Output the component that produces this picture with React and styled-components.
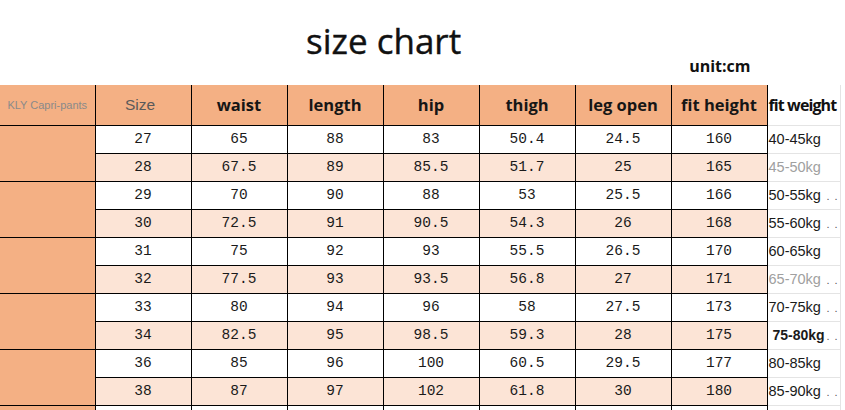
import { createGlobalStyle } from 'styled-components';
import styled from 'styled-components';

const COLORS = {
  orange: "#f4b084",
  pink: "#fce4d6",
  line: "#000",
  faint: "#e4e4e4",
  text: "#1a1a1a"
}

const GlobalStyle = createGlobalStyle`
body{
  margin:0;
  background:#fff;
}
`

const StyledPage = styled.main`
width:845px;
height:410px;
overflow:hidden;
background:#fff;
`

const StyledTitleBar = styled.header`
height:85px;
display:flex;
padding-left:306px;
box-sizing:border-box;
`

const StyledTitle = styled.h1`
margin:23px 0 0 0;
font-family:"Open Sans", sans-serif;
font-weight:400;
font-size:35px;
line-height:1;
color:#111;
-webkit-text-stroke:0.4px #111;
`

const StyledUnit = styled.span`
margin:58px 0 0 228px;
font-family:"Open Sans", sans-serif;
font-weight:700;
font-size:16px;
line-height:1;
color:#111;
`

const StyledTable = styled.table`
border-collapse:collapse;
table-layout:fixed;
width:840px;
`

const StyledRow = styled.tr`
height:${p => p.$head ? 40 : 28}px;
background:${p => p.$pink ? COLORS.pink : "#fff"};
`

const StyledHeadCell = styled.th`
padding:0;
background:${COLORS.orange};
border:1px solid ${COLORS.line};
border-top:none;
font-family:"Open Sans", sans-serif;
font-weight:700;
font-size:16.5px;
color:#161616;
white-space:nowrap;
overflow:hidden;
`

const StyledLabelCell = styled(StyledHeadCell)`
border-left:none;
font-family:"Liberation Sans", Arial, sans-serif;
font-weight:400;
font-size:11px;
color:#8a8a8a;
`

const StyledSizeHead = styled(StyledHeadCell)`
font-family:"Liberation Sans", Arial, sans-serif;
font-weight:400;
font-size:15.5px;
color:#5a5a5a;
padding-right:6px;
`

const StyledWeightHead = styled.th`
padding:0 0 0 1px;
text-align:left;
background:#fff;
border-bottom:1px solid ${COLORS.faint};
border-right:1px solid ${COLORS.faint};
font-family:"Open Sans", sans-serif;
font-weight:700;
font-size:16px;
letter-spacing:-0.9px;
color:#111;
white-space:nowrap;
overflow:hidden;
`

const StyledGroupCell = styled.td`
padding:0;
background:${COLORS.orange};
border:1px solid ${COLORS.line};
border-left:none;
`

const StyledCell = styled.td`
padding:0;
text-align:center;
border:1px solid ${COLORS.line};
font-family:"Liberation Mono", "Courier New", monospace;
font-size:14.5px;
color:${COLORS.text};
`

const StyledWeightCell = styled.td`
padding:0 0 0 1px;
background:#fff;
border-bottom:1px solid ${COLORS.faint};
border-right:1px solid ${COLORS.faint};
font-family:"Liberation Sans", Arial, sans-serif;
font-size:14.5px;
white-space:nowrap;
overflow:hidden;
`

const StyledWeightInner = styled.div`
display:flex;
align-items:baseline;
`

const StyledWeight = styled.span`
color:${p => p.$muted ? "#a0a0a0" : "#1a1a1a"};
font-weight:${p => p.$bold ? 700 : 400};
font-size:${p => p.$bold ? 14 : 14.5}px;
padding-left:${p => p.$bold ? 4 : 0}px;
`

const StyledDots = styled.span`
margin-left:auto;
padding-right:2px;
font-size:11px;
color:#555;
display:flex;
gap:5px;
`

const HEAD = ["waist", "length", "hip", "thigh", "leg open", "fit height"]

const ROWS = [
  { size: "27", v: ["65", "88", "83", "50.4", "24.5", "160"], w: "40-45kg" },
  { size: "28", v: ["67.5", "89", "85.5", "51.7", "25", "165"], w: "45-50kg", muted: true },
  { size: "29", v: ["70", "90", "88", "53", "25.5", "166"], w: "50-55kg", dots: true },
  { size: "30", v: ["72.5", "91", "90.5", "54.3", "26", "168"], w: "55-60kg", dots: true },
  { size: "31", v: ["75", "92", "93", "55.5", "26.5", "170"], w: "60-65kg" },
  { size: "32", v: ["77.5", "93", "93.5", "56.8", "27", "171"], w: "65-70kg", muted: true, dots: true },
  { size: "33", v: ["80", "94", "96", "58", "27.5", "173"], w: "70-75kg", dots: true },
  { size: "34", v: ["82.5", "95", "98.5", "59.3", "28", "175"], w: "75-80kg", bold: true, dots: true },
  { size: "36", v: ["85", "96", "100", "60.5", "29.5", "177"], w: "80-85kg" },
  { size: "38", v: ["87", "97", "102", "61.8", "30", "180"], w: "85-90kg", dots: true },
  { size: "next", v: ["", "", "", "", "", ""], w: "" },
]

export default function App() {
  return (
    <>
      <GlobalStyle />
      <StyledPage>
        <StyledTitleBar>
          <StyledTitle>size chart</StyledTitle>
          <StyledUnit>unit:cm</StyledUnit>
        </StyledTitleBar>
        <StyledTable>
          <colgroup>
            <col style={{ width: 95 }} />
            {[0, 1, 2, 3, 4, 5, 6].map(i => <col key={i} style={{ width: 96 }} />)}
            <col style={{ width: 73 }} />
          </colgroup>
          <thead>
            <StyledRow $head>
              <StyledLabelCell>KLY Capri-pants</StyledLabelCell>
              <StyledSizeHead>Size</StyledSizeHead>
              {HEAD.map(h => <StyledHeadCell key={h}>{h}</StyledHeadCell>)}
              <StyledWeightHead>fit weight</StyledWeightHead>
            </StyledRow>
          </thead>
          <tbody>
            {ROWS.map((row, i) => (
              <StyledRow key={row.size} $pink={i % 2 === 1}>
                {i % 2 === 0 && <StyledGroupCell rowSpan={2} />}
                <StyledCell>{row.size === "next" ? "" : row.size}</StyledCell>
                {row.v.map((v, j) => <StyledCell key={j}>{v}</StyledCell>)}
                <StyledWeightCell>
                  <StyledWeightInner>
                    <StyledWeight $muted={row.muted} $bold={row.bold}>{row.w}</StyledWeight>
                    {row.dots && <StyledDots><span>.</span><span>.</span></StyledDots>}
                  </StyledWeightInner>
                </StyledWeightCell>
              </StyledRow>
            ))}
          </tbody>
        </StyledTable>
      </StyledPage>
    </>
  )
}
